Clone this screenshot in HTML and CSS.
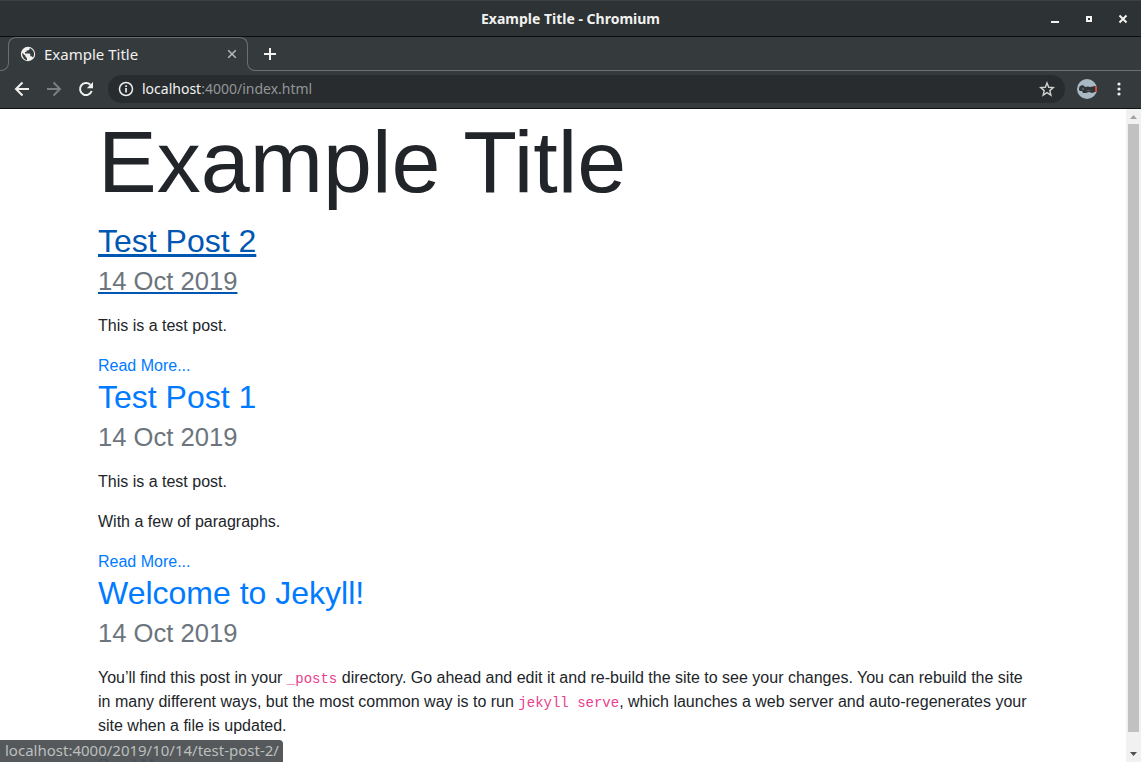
FILE: index.html
```
<!DOCTYPE html>
<html lang="en">
<head>
<meta charset="utf-8">
<title>Example Title</title>
<link rel="stylesheet" href="styles.css">
</head>
<body>
<header class="browser">
  <div class="titlebar">
    <span class="titlebar-text">Example Title - Chromium</span>
    <div class="window-controls">
      <button type="button" aria-label="Minimize"><svg width="12" height="12" viewBox="0 0 12 12"><path d="M2 8h8v2H2z" fill="#f3f3f1"/></svg></button>
      <button type="button" aria-label="Maximize"><svg width="12" height="12" viewBox="0 0 12 12"><path d="M4 4h4v4H4z" fill="none" stroke="#f3f3f1" stroke-width="2"/></svg></button>
      <button type="button" aria-label="Close window"><svg width="12" height="12" viewBox="0 0 12 12"><path d="M2.500 2.500l7 7M9.500 2.500l-7 7" fill="none" stroke="#f3f3f1" stroke-width="2"/></svg></button>
    </div>
  </div>
  <div class="tabstrip">
    <span class="strip-start"></span>
    <div class="tab">
      <svg width="16" height="16" viewBox="0 0 16 16"><circle cx="8" cy="8" r="7.200" fill="#f1f1ef"/><path d="M2.300 6.800L5.500 10v.8L7 12.200v2C3.800 13.600 1.900 10.500 2.300 6.800zM9.800 2l-.3 1.500L8 4.500H6.500V6H5v1.500h4.500l.8.800v2h1.400l1.200 1.200C15.500 8 13.500 3.500 9.800 2z" fill="#353a3d"/></svg>
      <span class="tab-title">Example Title</span>
      <button type="button" aria-label="Close tab"><svg width="12" height="12" viewBox="0 0 12 12"><path d="M2.200 2.200l7.600 7.600M9.800 2.200l-7.600 7.600" fill="none" stroke="#b5b7b6" stroke-width="1.600"/></svg></button>
    </div>
    <div class="strip-rest"></div>
    <button class="new-tab" type="button" aria-label="New tab"><svg width="14" height="14" viewBox="0 0 14 14"><path d="M7 1v12M1 7h12" stroke="#f1f1ef" stroke-width="2"/></svg></button>
  </div>
  <div class="toolbar">
    <div class="nav-buttons">
      <button type="button" aria-label="Back"><svg width="16" height="16" viewBox="0 0 16 16"><path d="M15 8H2.500M8.500 1.500L2 8l6.500 6.500" fill="none" stroke="#f1f1ef" stroke-width="2"/></svg></button>
      <button type="button" aria-label="Forward"><svg width="16" height="16" viewBox="0 0 16 16"><path d="M1 8h12.500M7.500 1.500L14 8l-6.500 6.500" fill="none" stroke="#7d7f7e" stroke-width="2"/></svg></button>
      <button type="button" aria-label="Reload"><svg width="16" height="16" viewBox="0 0 16 16"><path d="M13.700 10A6 6 0 1 1 12.300 3.800" fill="none" stroke="#f1f1ef" stroke-width="2"/><path d="M15 1v6.200H8.800z" fill="#f1f1ef"/></svg></button>
    </div>
    <div class="omnibox">
      <svg width="16" height="16" viewBox="0 0 16 16"><circle cx="8" cy="8" r="6.500" fill="none" stroke="#eeeeec" stroke-width="1.500"/><path d="M7.200 7h1.700v4.500H7.200zM7.200 4.300h1.700V6H7.200z" fill="#eeeeec"/></svg>
      <a class="address" href="#">localhost<span class="path">:4000/index.html</span></a>
      <button type="button" aria-label="Bookmark this page"><svg width="16" height="16" viewBox="0 0 16 16"><path d="M8 2l1.700 4.300 4.600.3-3.500 3 1.100 4.500L8 11.600l-3.900 2.500 1.100-4.500-3.500-3 4.600-.3z" fill="none" stroke="#d0d1cf" stroke-width="1.400"/></svg></button>
    </div>
    <button type="button" aria-label="Profile"><svg width="20" height="20" viewBox="0 0 20 20"><defs><clipPath id="avatar"><circle cx="10" cy="10" r="10"/></clipPath></defs><g clip-path="url(#avatar)"><path d="M0 0h20v20H0z" fill="#a9b9c5"/><path d="M2 9l1-2 3-1 2 2 3-.5 2 .5 5-1v6l-3 1-3-1-3 1H6l-1-2H3l-1-1z" fill="#30363a"/><path d="M5 9h2v2H5zM10 11h3v1h-3z" fill="#59605c"/><path d="M18 7h2v6h-2z" fill="#d6452b"/></g></svg></button>
    <button class="menu" type="button" aria-label="Menu"><svg width="16" height="16" viewBox="0 0 16 16"><g fill="#f1f1ef"><circle cx="8" cy="3" r="1.600"/><circle cx="8" cy="8" r="1.600"/><circle cx="8" cy="13" r="1.600"/></g></svg></button>
  </div>
</header>
<div class="viewport">
  <main class="page">
    <div class="container">
      <h1>Example Title</h1>
      <article>
        <h2><a class="hovered" href="#">Test Post 2<br><small>14 Oct 2019</small></a></h2>
        <p>This is a test post.</p>
        <a href="#">Read More...</a>
      </article>
      <article>
        <h2><a href="#">Test Post 1<br><small>14 Oct 2019</small></a></h2>
        <p>This is a test post.</p>
        <p>With a few of paragraphs.</p>
        <a href="#">Read More...</a>
      </article>
      <article>
        <h2><a href="#">Welcome to Jekyll!<br><small>14 Oct 2019</small></a></h2>
        <p>You’ll find this post in your <code>_posts</code> directory. Go ahead and edit it and re-build the site to see your changes. You can rebuild the site in many different ways, but the most common way is to run <code>jekyll serve</code>, which launches a web server and auto-regenerates your site when a file is updated.</p>
        <a href="#">Read More...</a>
      </article>
    </div>
  </main>
  <div class="scrollbar">
    <svg width="15" height="15" viewBox="0 0 15 15"><path d="M4 10l3.500-4L11 10z" fill="#a3a3a3"/></svg>
    <div class="thumb"></div>
    <svg width="15" height="15" viewBox="0 0 15 15"><path d="M4 5l3.500 4L11 5z" fill="#505050"/></svg>
  </div>
  <div class="status">localhost:4000/2019/10/14/test-post-2/</div>
</div>
</body>
</html>
```
FILE: styles.css
```
* { box-sizing: border-box; }

body {
  margin: 0;
  height: 100vh;
  display: flex;
  flex-direction: column;
  overflow: hidden;
  font: 16px/24px "Liberation Sans", Arial, sans-serif;
  color: #212529;
  background: #fff;
}

svg { display: block; flex: none; }

button {
  display: block;
  flex: none;
  padding: 0;
  border: 0;
  background: none;
}

.browser {
  flex: none;
  background: #353a3d;
  color: #f1f1ef;
  font: 14px/16px "Noto Sans", "Open Sans", sans-serif;
  border-bottom: 1px solid #101214;
}

.titlebar {
  display: grid;
  grid-template-columns: 1fr auto 1fr;
  align-items: center;
  height: 37px;
  background: #2d3235;
  border-top: 1px solid #3b4043;
  border-bottom: 1px solid #0c0d0e;
}

.titlebar-text {
  grid-column: 2;
  font-weight: 700;
}

.window-controls {
  display: flex;
  justify-content: flex-end;
  gap: 22px;
  padding-right: 12px;
}

.tabstrip {
  display: flex;
  position: relative;
  height: 34px;
}

.strip-start,
.strip-rest {
  align-self: flex-end;
  height: 9px;
  border-bottom: 1px solid #6b7070;
}

.strip-start {
  width: 9px;
  margin-right: -1px;
  border-right: 1px solid #6b7070;
  border-bottom-right-radius: 8px;
}

.strip-rest {
  flex: 1;
  margin-left: -1px;
  border-left: 1px solid #6b7070;
  border-bottom-left-radius: 8px;
}

.tab {
  display: flex;
  align-items: center;
  width: 240px;
  height: 26px;
  padding: 7px 9px 0 11px;
  border: 1px solid #6b7070;
  border-bottom: 0;
  border-radius: 8px 8px 0 0;
}

.tab-title {
  flex: 1;
  margin-left: 8px;
  font-size: 15px;
}

.new-tab {
  position: absolute;
  left: 263px;
  top: 10px;
}

.toolbar {
  display: flex;
  align-items: center;
  gap: 12px;
  height: 37px;
  padding: 0 14px 2px;
}

.nav-buttons {
  display: flex;
  gap: 16px;
}

.omnibox {
  display: flex;
  flex: 1;
  align-items: center;
  gap: 8px;
  height: 28px;
  margin-left: 2px;
  padding: 0 10px;
  border-radius: 14px;
  background: #282c2f;
}

.address {
  flex: 1;
  color: #f1f1ef;
  text-decoration: none;
}

.path { color: #929696; }

.menu { margin-left: 2px; }

.viewport {
  display: flex;
  position: relative;
  flex: 1;
  min-height: 0;
}

.page {
  flex: 1;
  overflow: hidden;
}

.container {
  max-width: 960px;
  margin: 0 auto;
  padding: 0 15px;
}

h1,
h2 { font-weight: 400; }

h1 {
  margin: 0 0 7px;
  font-size: 88px;
  line-height: 106px;
}

h2 {
  margin: 0 0 14px;
  font-size: 32px;
  line-height: 38px;
}

p { margin: 0 0 16px; }

.page a {
  color: #007bff;
  text-decoration: none;
}

.page a.hovered {
  color: #0056b3;
  text-decoration: underline;
}

small {
  display: inline-block;
  font-size: 80%;
  color: #6c757d;
}

.hovered small {
  text-decoration: underline;
  text-decoration-color: #0056b3;
}

code {
  font-family: "Liberation Mono", monospace;
  font-size: 14px;
  line-height: 16px;
  color: #e83e8c;
}

.scrollbar {
  display: flex;
  flex-direction: column;
  width: 15px;
  background: #f1f1f1;
}

.thumb {
  flex: 1;
  margin: 0 2px 15px;
  background: #c1c1c1;
}

.status {
  position: absolute;
  left: 0;
  bottom: 0;
  padding: 2px 4px 4px 5px;
  border-top-right-radius: 4px;
  background: rgba(70, 75, 78, 0.92);
  color: #bcbfbd;
  font: 15px/16px "Noto Sans", "Open Sans", sans-serif;
}
```
